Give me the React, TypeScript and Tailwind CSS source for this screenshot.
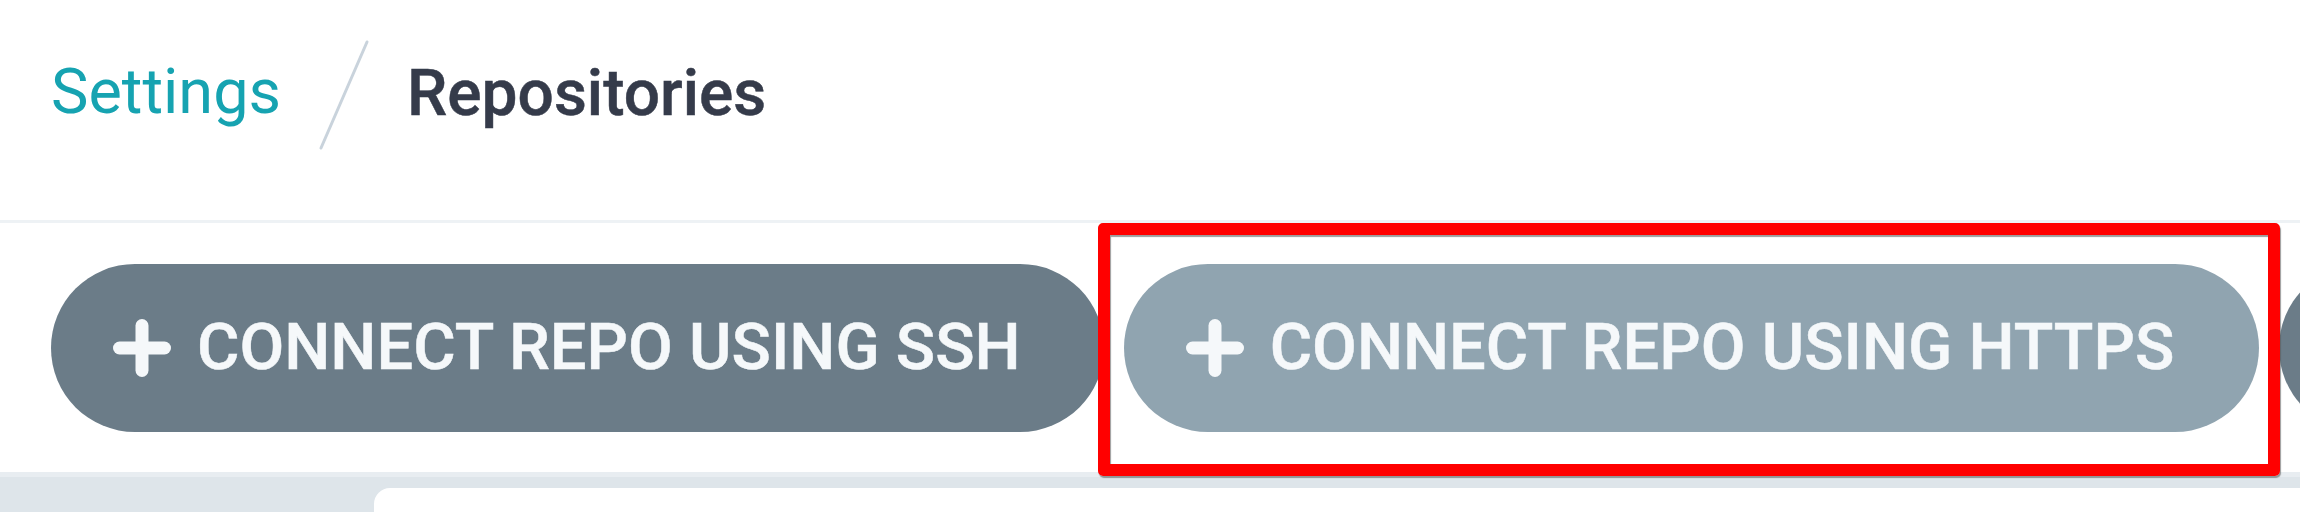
import React from 'react';

function PlusIcon() {
    return (
        <svg width="58" height="58" viewBox="0 0 58 58" className="shrink-0">
            <line x1="29" y1="6.5" x2="29" y2="51.5" stroke="#f5f8fa" strokeWidth="13" strokeLinecap="round" />
            <line x1="6.5" y1="29" x2="51.5" y2="29" stroke="#f5f8fa" strokeWidth="13" strokeLinecap="round" />
        </svg>
    );
}

interface ConnectButtonProps {
    label: string;
    muted?: boolean;
}

function ConnectButton({ label, muted }: ConnectButtonProps) {
    return (
        <button
            className={
                muted
                    ? 'shrink-0 h-[168px] rounded-[84px] bg-[#90a4b0] pl-[62px] pr-[85px] flex items-center gap-[26px] text-[#f5f8fa] text-[65px] font-medium leading-none whitespace-nowrap [-webkit-text-stroke:0.5px_#f5f8fa]'
                    : 'shrink-0 h-[168px] rounded-[84px] bg-[#6b7c88] pl-[62px] pr-[83px] flex items-center gap-[26px] text-[#f5f8fa] text-[65px] font-medium leading-none whitespace-nowrap [-webkit-text-stroke:0.5px_#f5f8fa]'
            }
        >
            <PlusIcon />
            <span>{label}</span>
        </button>
    );
}

export default function App() {
    return (
        <div className="relative w-[2300px] h-[512px] overflow-hidden bg-white font-['Roboto',sans-serif]">
            {/* breadcrumb header */}
            <div className="h-[220px] px-[51px] pt-[40px] flex items-start">
                <div className="flex items-center h-[110px]">
                    <span className="text-[63px] leading-none font-normal text-[#16a3b1] pb-[8px]">Settings</span>
                    <svg width="50" height="110" viewBox="0 0 50 110" className="mx-[38px]">
                        <line x1="48" y1="2" x2="2" y2="108" stroke="#c9d3dc" strokeWidth="3" strokeLinecap="round" />
                    </svg>
                    <span className="text-[64px] leading-none font-medium text-[#353b4a] pb-[2px] [-webkit-text-stroke:0.5px_#353b4a]">Repositories</span>
                </div>
            </div>

            {/* toolbar */}
            <div className="h-[252px] border-t-[3px] border-[#eef2f5] px-[51px] flex items-center gap-[20px] overflow-hidden">
                <ConnectButton label="CONNECT REPO USING SSH" />
                <ConnectButton label="CONNECT REPO USING HTTPS" muted />
                <button aria-label="Connect repo using GitHub App" className="shrink-0 w-[600px] h-[168px] rounded-[84px] bg-[#6b7c88]" />
            </div>

            {/* content area */}
            <div className="h-[40px] border-t-[5px] border-[#e8edf1] bg-[#dee5ea] pl-[374px] pt-[11px]">
                <div className="h-full bg-white rounded-tl-[16px]" />
            </div>

            {/* highlight annotation */}
            <div className="absolute left-[1098px] top-[223px] w-[1182px] h-[253px] border-[12px] border-[#ff0000] rounded-[5px] shadow-[1px_2px_1px_rgba(90,90,90,0.6),inset_1px_2px_1px_rgba(90,90,90,0.6)]" />
        </div>
    );
}
